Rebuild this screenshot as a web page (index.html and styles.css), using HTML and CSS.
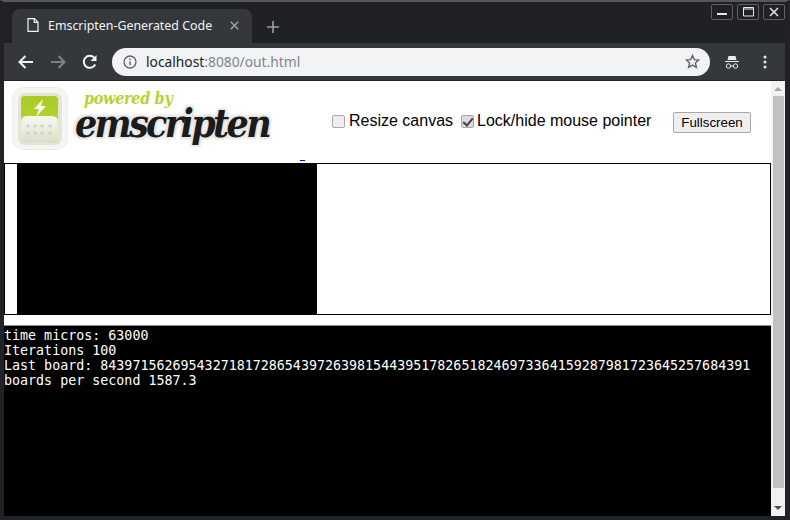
FILE: index.html
```html
<!DOCTYPE html>
<html lang="en">
<head>
<meta charset="utf-8">
<title>Emscripten-Generated Code</title>
<link rel="stylesheet" href="styles.css">
</head>
<body>
<div class="window">
  <div class="tabbar">
    <div class="tab">
      <svg class="favicon" width="12" height="14" viewBox="0 0 12 14"><path d="M1 .7h6.5L11 4.2v9.1H1z M7.3 .7v3.7H11" fill="none" stroke="#f1f3f4" stroke-width="1.2"/></svg>
      <span class="tab-title">Emscripten-Generated Code</span>
      <svg class="tab-close" width="9" height="9" viewBox="0 0 9 9"><path d="M.8.8l7.4 7.4M8.2.8L.8 8.2" stroke="#9aa0a6" stroke-width="1.5"/></svg>
    </div>
    <svg class="new-tab" width="12" height="12" viewBox="0 0 12 12"><path d="M6 0v12M0 6h12" stroke="#9aa0a6" stroke-width="1.6"/></svg>
    <div class="win-buttons">
      <div class="win-btn"><svg width="10" height="10" viewBox="0 0 10 10"><path d="M0 7h10" stroke="#e8e8e8" stroke-width="2"/></svg></div>
      <div class="win-btn"><svg width="11" height="10" viewBox="0 0 11 10"><path d="M.5 .5h10v8.500H.5z M.5 2h10" fill="none" stroke="#e8e8e8"/></svg></div>
      <div class="win-btn"><svg width="10" height="10" viewBox="0 0 10 10"><path d="M1 1l8 8M9 1l-8 8" stroke="#e8e8e8" stroke-width="1.500"/></svg></div>
    </div>
  </div>
  <div class="toolbar">
    <svg class="nav" width="16" height="14" viewBox="0 0 16 14"><path d="M15 7H2M7.500 1L1.500 7l6 6" fill="none" stroke="#f1f3f4" stroke-width="2"/></svg>
    <svg class="nav" width="16" height="14" viewBox="0 0 16 14"><path d="M1 7h13M8.500 1l6 6-6 6" fill="none" stroke="#7d8184" stroke-width="2"/></svg>
    <svg class="nav" width="16" height="16" viewBox="0 0 16 16"><path d="M13.200 10.500A6 6 0 1 1 12.300 3.800" fill="none" stroke="#f1f3f4" stroke-width="2"/><path d="M14.500 1v6h-6z" fill="#f1f3f4"/></svg>
    <div class="omnibox">
      <svg width="14" height="14" viewBox="0 0 14 14"><circle cx="7" cy="7" r="6" fill="none" stroke="#5f6368" stroke-width="1.300"/><path d="M7 6.200v4M7 3.600v1.400" stroke="#5f6368" stroke-width="1.400"/></svg>
      <span class="url"><span class="host">localhost</span>:8080/out.html</span>
      <svg class="star" width="15" height="15" viewBox="0 0 15 15"><path d="M7.500 1.500l1.800 4.100 4.500.4-3.400 3 1 4.400-3.900-2.300-3.900 2.300 1-4.400-3.400-3 4.500-.4z" fill="none" stroke="#5f6368" stroke-width="1.400"/></svg>
    </div>
    <svg class="incognito" width="14" height="14" viewBox="0 0 14 14"><path d="M3.500 1h7l1 4h-9zM0 6h14v1H0z" fill="#e8eaed"/><circle cx="3.500" cy="11" r="2.200" fill="none" stroke="#e8eaed"/><circle cx="10.500" cy="11" r="2.200" fill="none" stroke="#e8eaed"/><path d="M5.700 11h2.600" stroke="#e8eaed"/></svg>
    <svg class="menu" width="4" height="14" viewBox="0 0 4 14"><circle cx="2" cy="2" r="1.500" fill="#e8eaed"/><circle cx="2" cy="7" r="1.500" fill="#e8eaed"/><circle cx="2" cy="12" r="1.500" fill="#e8eaed"/></svg>
  </div>
  <div class="viewport">
    <div class="page">
      <div class="top">
        <div class="logo-wrap">
          <svg class="icon-logo" width="56" height="63" viewBox="0 0 56 63">
            <defs>
              <linearGradient id="pad" x1="0" y1="0" x2="0" y2="1"><stop offset="0" stop-color="#f6f8ee"/><stop offset="1" stop-color="#d9dfca"/></linearGradient>
              <linearGradient id="grn" x1="0" y1="0" x2="0" y2="1"><stop offset="0" stop-color="#a9cb26"/><stop offset="1" stop-color="#bcd93c"/></linearGradient>
            </defs>
            <rect x=".5" y=".5" width="55" height="62" rx="11" fill="#f5f6f3" stroke="#ecede9"/>
            <rect x="6" y="6" width="44" height="52" rx="7" fill="#e2e6d2"/>
            <rect x="9" y="9" width="37" height="47" rx="4" fill="url(#grn)"/>
            <path d="M9 35q0-6 6-6h25q6 0 6 6v17q0 4-4 4H13q-4 0-4-4z" fill="url(#pad)"/>
            <path d="M31 12l-9 10h5l-3 8 10-11h-5z" fill="#f8faec"/>
            <g fill="#ccd3bc"><circle cx="16" cy="39" r="1.600"/><circle cx="23" cy="39" r="1.600"/><circle cx="30" cy="39" r="1.600"/><circle cx="38" cy="39" r="1.600"/><circle cx="16" cy="46" r="1.600"/><circle cx="23" cy="46" r="1.600"/><circle cx="30" cy="46" r="1.600"/><circle cx="38" cy="46" r="1.600"/></g>
          </svg>
          <div class="wordmark">
            <span class="powered">powered by</span>
            <span class="brand">emscripten</span>
          </div>
        </div>
        <label class="opt opt-resize"><input type="checkbox">Resize canvas</label>
        <label class="opt opt-lock"><input type="checkbox" checked>Lock/hide mouse pointer</label>
        <button class="fs" type="button">Fullscreen</button>
        <span class="link-dash"></span>
      </div>
      <div class="canvas-box"><div class="canvas"></div></div>
      <pre class="output">time micros: 63000
Iterations 100
Last board: 843971562695432718172865439726398154439517826518246973364159287981723645257684391
boards per second 1587.3</pre>
    </div>
    <div class="scrollbar">
      <div class="arrow up"></div>
      <div class="track"><div class="thumb"></div></div>
      <div class="arrow down"></div>
    </div>
  </div>
</div>
</body>
</html>
```

FILE: styles.css
```css
* { box-sizing: border-box; }
html, body { margin: 0; padding: 0; }
body { width: 790px; height: 520px; overflow: hidden; background: #202124; }
.window {
  width: 790px; height: 520px;
  display: flex; flex-direction: column;
  border-style: solid;
  border-color: #55585a #202225 #202225 #202225;
  border-width: 2px 5px 4px 4px;
  background: #202124;
  font-family: "Liberation Sans", Arial, sans-serif;
}
.tabbar { height: 41px; display: flex; align-items: flex-end; padding-left: 8px; position: relative; }
.tab {
  width: 240px; height: 34px; background: #35383b;
  border-radius: 8px 8px 0 0;
  display: flex; align-items: center; padding: 0 13px 2px 15px;
  color: #f1f3f4;
}
.tab-title { font: 12.400px "Noto Sans", sans-serif; margin-left: 9px; flex: 1; white-space: nowrap; }
.new-tab { margin: 0 0 10px 15px; }
.win-buttons { position: absolute; right: 0; top: 2px; display: flex; gap: 4px; }
.win-btn {
  width: 22px; height: 16px; border: 1px solid #5f6265; border-radius: 2px;
  display: flex; align-items: center; justify-content: center;
}
.toolbar { height: 38px; background: #35383b; display: flex; align-items: center; padding-left: 14px; border-bottom: 1px solid #202225; }
.nav { margin-right: 16px; flex: none; }
.omnibox {
  width: 598px; height: 28px; background: #f1f3f4; border-radius: 14px;
  display: flex; align-items: center; padding: 0 10px 0 11px; margin-left: -2px;
}
.url { font: 13.800px "Noto Sans", sans-serif; color: #80868b; margin-left: 9px; flex: 1; }
.host { color: #202124; }
.incognito { margin-left: 15px; }
.menu { margin-left: 24px; }
.viewport { flex: 1; display: flex; background: #fff; min-height: 0; }
.page { flex: 1; min-width: 0; display: flex; flex-direction: column; }
.top { height: 82px; position: relative; display: flex; align-items: flex-start; }
.logo-wrap { display: flex; width: 328px; flex: none; padding: 6px 0 0 8px; }
.wordmark { display: flex; flex-direction: column; margin-left: 7px; padding-top: 4px; }
.powered {
  font: italic bold 16px/16px "DejaVu Serif Condensed", "DejaVu Serif", serif;
  color: #b4d334; margin: 0 0 -3px 9px; letter-spacing: -.3px; white-space: nowrap;
}
.brand {
  font: italic bold 39px/38px "DejaVu Serif Condensed", "DejaVu Serif", serif;
  color: #1b1b1b; letter-spacing: -2.700px; white-space: nowrap;
  text-shadow: 2px 2px 2px #e6e6e6, -2px 2px 2px #e6e6e6, 2px -2px 2px #e6e6e6, -2px -2px 2px #e6e6e6;
}
.opt { display: flex; align-items: center; font-size: 16px; color: #000; margin-top: 31px; white-space: nowrap; line-height: 18px; }
.opt input {
  appearance: none; -webkit-appearance: none;
  width: 13px; height: 13px; margin: 0 4px 0 0; position: relative;
  background: #eee; border: 1px solid #a8a8a8; border-radius: 2px; flex: none;
}
.opt input:checked { background: #dcdcdc; }
.opt input:checked::before {
  content: ""; position: absolute; left: 3px; top: 0; width: 4px; height: 8px;
  border: solid #444; border-width: 0 2px 2px 0; transform: rotate(40deg);
}
.opt-lock { margin-left: 8px; }
.opt-lock input { margin-right: 3px; }
.fs {
  position: absolute; left: 669px; top: 31px;
  width: 78px; height: 21px; padding: 0;
  font: 13.333px "Liberation Sans", Arial, sans-serif; color: #000;
  background: #efefef; border: 1px solid #a9a9a9; border-radius: 2px;
}
.link-dash { position: absolute; left: 296px; top: 79px; width: 5px; height: 1px; background: #00e; }
.canvas-box { height: 152px; border: 1px solid #000; padding: 0 0 0 12px; }
.canvas { width: 300px; height: 150px; background: #000; }
.output {
  flex: 1; margin: 10px 0 0; padding: 2px 0 0; background: #000; color: #fff;
  font: 13.333px/15px "DejaVu Sans Mono", monospace; overflow: hidden; border-top: 1px solid #8a8a8a;
}
.scrollbar { width: 14px; background: #f1f1f1; display: flex; flex-direction: column; }
.arrow { height: 15px; flex: none; position: relative; }
.arrow::after { content: ""; position: absolute; left: 3px; border-left: 4px solid transparent; border-right: 4px solid transparent; }
.arrow.up::after { top: 6px; border-bottom: 4px solid #a3a3a3; }
.arrow.down::after { top: 5px; border-top: 4px solid #505050; }
.track { flex: 1; padding: 0 1px 13px 2px; min-height: 0; }
.thumb { height: 100%; background: #c1c1c1; }
```
